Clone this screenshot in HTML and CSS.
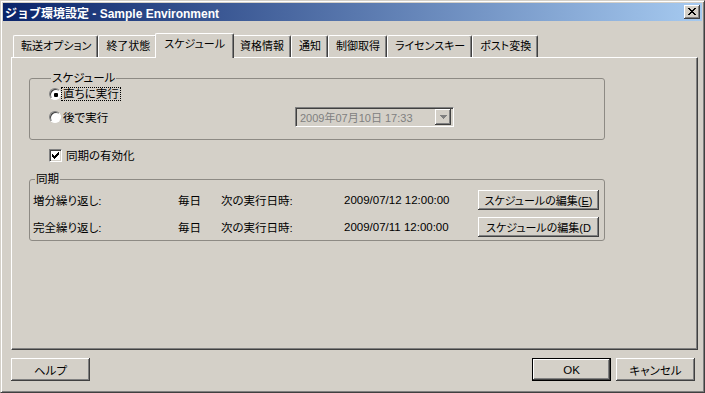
FILE: index.html
```html
<!DOCTYPE html>
<html lang="ja">

<head>
    <meta charset="UTF-8">
    <title>ジョブ環境設定 - Sample Environment</title>
    <link rel="stylesheet" href="styles.css">
</head>

<body>
    <div class="window">
        <div class="titlebar">
            <span class="title">ジョブ環境設定 - Sample Environment</span>
            <button class="close-btn">
                <svg width="8" height="7" viewBox="0 0 8 7" shape-rendering="crispEdges">
                    <path d="M0 0h2v1H0zM6 0h2v1H6zM1 1h2v1H1zM5 1h2v1H5zM2 2h4v1H2zM3 3h2v1H3zM2 4h4v1H2zM1 5h2v1H1zM5 5h2v1H5zM0 6h2v1H0zM6 6h2v1H6z" fill="#000"/>
                </svg>
            </button>
        </div>

        <div class="content">
            <ul class="tabs">
                <li class="tab">転送オプション</li>
                <li class="tab">終了状態</li>
                <li class="tab active">スケジュール</li>
                <li class="tab">資格情報</li>
                <li class="tab">通知</li>
                <li class="tab">制御取得</li>
                <li class="tab">ライセンスキー</li>
                <li class="tab">ポスト変換</li>
            </ul>

            <div class="panel">
                <fieldset class="group group-schedule">
                    <legend>スケジュール</legend>
                    <div class="option-row">
                        <span class="radio checked"></span>
                        <span class="focus-label">直ちに実行</span>
                    </div>
                    <div class="option-row second">
                        <span class="radio-label"><span class="radio"></span><span class="radio-text">後で実行</span></span>
                        <div class="datepicker">
                            <span class="date-text">2009年07月10日 17:33</span>
                            <span class="drop-btn">
                                <svg width="7" height="4" viewBox="0 0 7 4" shape-rendering="crispEdges">
                                    <path d="M0 0h7v1H0zM1 1h5v1H1zM2 2h3v1H2zM3 3h1v1H3z" fill="#808080"/>
                                </svg>
                            </span>
                        </div>
                    </div>
                </fieldset>

                <div class="check-row">
                    <span class="checkbox">
                        <svg width="7" height="7" viewBox="0 0 7 7" shape-rendering="crispEdges">
                            <path d="M6 0h1v1H6zM5 1h2v1H5zM0 2h1v1H0zM4 2h3v1H4zM0 3h2v1H0zM3 3h3v1H3zM0 4h5v1H0zM1 5h3v1H1zM2 6h1v1H2z" fill="#000"/>
                        </svg>
                    </span>
                    <span>同期の有効化</span>
                </div>

                <fieldset class="group group-sync">
                    <legend>同期</legend>
                    <div class="sync-grid">
                        <span>増分繰り返し:</span>
                        <span>毎日</span>
                        <span>次の実行日時:</span>
                        <span>2009/07/12 12:00:00</span>
                        <button class="btn edit-btn">スケジュールの編集(<u>E</u>)</button>

                        <span>完全繰り返し:</span>
                        <span>毎日</span>
                        <span>次の実行日時:</span>
                        <span>2009/07/11 12:00:00</span>
                        <button class="btn edit-btn">スケジュールの編集(D</button>
                    </div>
                </fieldset>
            </div>

            <div class="footer">
                <button class="btn">ヘルプ</button>
                <div class="footer-right">
                    <button class="btn default">OK</button>
                    <button class="btn">キャンセル</button>
                </div>
            </div>
        </div>
    </div>
</body>

</html>
```

FILE: styles.css
```css
body {
    margin: 0;
    padding: 0;
    background-color: #d4d0c8;
    font-family: "Liberation Sans", "Noto Sans CJK JP", sans-serif;
    font-size: 11.5px;
    font-feature-settings: "palt";
    color: #000;
}

.window {
    width: 705px;
    height: 393px;
    box-sizing: border-box;
    padding: 2px;
    background-color: #d4d0c8;
    border: 1px solid;
    border-color: #d4d0c8 #404040 #404040 #d4d0c8;
    box-shadow: inset 1px 1px #fff, inset -1px -1px #808080;
    display: flex;
    flex-direction: column;
}

.titlebar {
    height: 18px;
    display: flex;
    align-items: center;
    justify-content: space-between;
    padding-left: 2px;
    background: linear-gradient(to right, #0a246a, #a6caf0);
    color: #fff;
}

.title {
    font-size: 12px;
    font-weight: bold;
    font-feature-settings: normal;
}

.close-btn {
    width: 16px;
    height: 14px;
    margin-right: 2px;
    padding: 0;
    border: none;
    background-color: #d4d0c8;
    box-shadow: inset -1px -1px #404040, inset 1px 1px #fff, inset -2px -2px #808080;
    display: flex;
    align-items: center;
    justify-content: center;
}

.close-btn svg {
    display: block;
    margin: 0 0 1px 0;
}

.content {
    flex: 1;
    padding: 12px 4px 0 8px;
    display: flex;
    flex-direction: column;
}

/* tab strip */
.tabs {
    list-style: none;
    margin: 0;
    padding: 0 0 0 2px;
    height: 24px;
    display: flex;
    align-items: flex-end;
}

.tab {
    height: 22px;
    box-sizing: border-box;
    padding: 0 6px 0 7px;
    font-size: 11px;
    line-height: 21px;
    white-space: nowrap;
    background-color: #d4d0c8;
    border-top: 1px solid #fff;
    border-left: 1px solid #fff;
    border-right: 1px solid #404040;
    border-radius: 2px 2px 0 0;
    box-shadow: inset -1px 0 #808080;
}

.tab.active {
    position: relative;
    z-index: 1;
    height: 25px;
    margin: 0 -2px -1px -2px;
    padding: 0 8px 3px 8px;
}

/* page */
.panel {
    height: 293px;
    box-sizing: border-box;
    border: 1px solid;
    border-color: #fff #404040 #404040 #fff;
    box-shadow: inset -1px -1px #808080;
    padding: 13px 0 0 17px;
}

.group {
    width: 576px;
    box-sizing: border-box;
    margin: 0;
    padding: 0;
    border: 1px solid #8d8a84;
    border-radius: 3px;
}

.group legend {
    margin-left: 2px;
    padding: 0 1px;
    line-height: 14px;
}

.group-schedule {
    padding: 0 0 12px 19px;
}

.option-row {
    height: 18px;
    display: flex;
    align-items: center;
}

.option-row.second {
    height: 20px;
    margin-top: 4px;
}

.radio {
    width: 12px;
    height: 12px;
    box-sizing: border-box;
    border-radius: 50%;
    background-color: #fff;
    border: 1px solid;
    border-color: #808080 #fff #fff #808080;
    box-shadow: inset 1px 1px #404040;
    display: flex;
    align-items: center;
    justify-content: center;
    flex: none;
}

.radio.checked::after {
    content: "";
    width: 4px;
    height: 4px;
    border-radius: 1px;
    background-color: #000;
    margin: 1px 0 0 1px;
}

.focus-label {
    margin-left: 1px;
    padding: 0 1px;
    line-height: 12px;
    outline: 1px dotted #000;
    outline-offset: 0;
}

.radio-label {
    width: 246px;
    display: flex;
    align-items: center;
}

.radio-text {
    margin-left: 2px;
}

.datepicker {
    width: 159px;
    height: 20px;
    box-sizing: border-box;
    border: 1px solid;
    border-color: #808080 #fff #fff #808080;
    box-shadow: inset 1px 1px #404040, inset -1px -1px #d4d0c8;
    display: flex;
    align-items: center;
    justify-content: space-between;
    padding: 0 2px 0 4px;
    color: #808080;
}

.date-text {
    font-size: 11px;
}

.drop-btn {
    width: 16px;
    height: 16px;
    box-sizing: border-box;
    background-color: #d4d0c8;
    box-shadow: inset -1px -1px #404040, inset 1px 1px #fff, inset -2px -2px #808080;
    display: flex;
    align-items: center;
    justify-content: center;
}

.check-row {
    height: 14px;
    margin: 8px 0 0 20px;
    display: flex;
    align-items: center;
    gap: 4px;
}

.checkbox {
    width: 13px;
    height: 13px;
    box-sizing: border-box;
    background-color: #fff;
    border: 1px solid;
    border-color: #808080 #fff #fff #808080;
    box-shadow: inset 1px 1px #404040, inset -1px -1px #d4d0c8;
    display: flex;
    align-items: center;
    justify-content: center;
}

.group-sync {
    margin-top: 10px;
    padding: 4px 0 3px 3px;
}

.sync-grid {
    display: grid;
    grid-template-columns: 145px 43px 123px 134px 121px;
    grid-auto-rows: 20px;
    row-gap: 7px;
    align-items: center;
}

/* buttons */
.btn {
    font-family: inherit;
    font-size: 11.5px;
    font-feature-settings: "palt";
    color: #000;
    background-color: #d4d0c8;
    border: none;
    padding: 0;
    width: 79px;
    height: 23px;
    box-shadow: inset -1px -1px #404040, inset 1px 1px #fff, inset -2px -2px #808080;
}

.btn.default {
    border: 1px solid #000;
}

.edit-btn {
    width: 121px;
    height: 20px;
    font-size: 11px;
}

.footer {
    margin-top: 8px;
    padding-right: 3px;
    display: flex;
    justify-content: space-between;
}

.footer-right {
    display: flex;
    gap: 5px;
}
```
